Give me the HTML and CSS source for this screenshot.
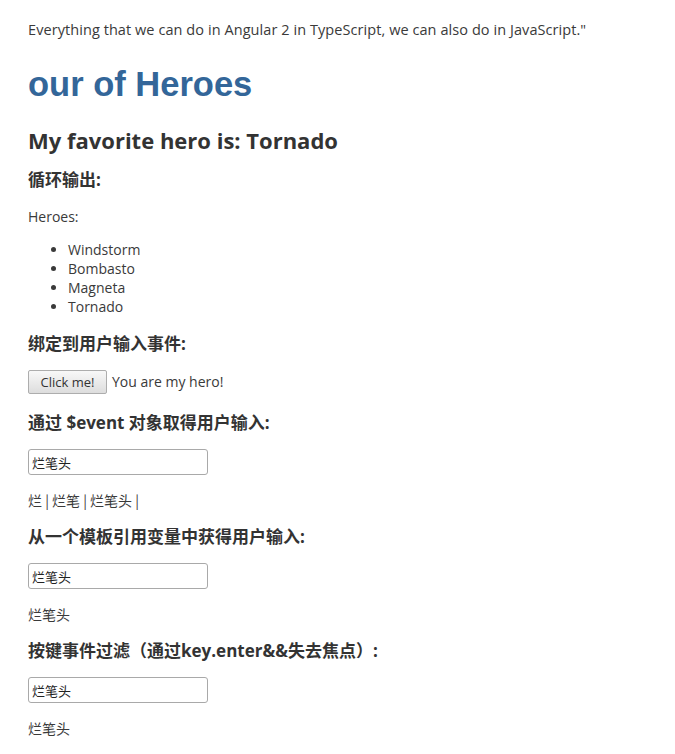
FILE: index.html
```html
<!DOCTYPE html>
<html lang="zh">
<head>
<meta charset="utf-8">
<title>Tour of Heroes</title>
<link rel="stylesheet" href="styles.css">
</head>
<body>
<p class="quote">Everything that we can do in Angular 2 in TypeScript, we can also do in JavaScript."</p>
<h1 class="title">our of Heroes</h1>
<h2 class="fav">My favorite hero is: Tornado</h2>

<h3 class="sec sec-first">循环输出:</h3>
<p class="line heroes-label">Heroes:</p>
<ul class="heroes">
  <li>Windstorm</li>
  <li>Bombasto</li>
  <li>Magneta</li>
  <li>Tornado</li>
</ul>

<h3 class="sec sec-a">绑定到用户输入事件:</h3>
<div class="btn-row">
  <button class="btn" type="button">Click me!</button>
  <span class="line">You are my hero!</span>
</div>

<h3 class="sec sec-b">通过 $event 对象取得用户输入:</h3>
<input class="field" type="text" value="烂笔头">
<p class="line out">烂 | 烂笔 | 烂笔头 |</p>

<h3 class="sec sec-c">从一个模板引用变量中获得用户输入:</h3>
<input class="field" type="text" value="烂笔头">
<p class="line out">烂笔头</p>

<h3 class="sec sec-c">按键事件过滤（通过key.enter&amp;&amp;失去焦点）:</h3>
<input class="field" type="text" value="烂笔头">
<p class="line out">烂笔头</p>
</body>
</html>
```

FILE: styles.css
```css
html, body {
  margin: 0;
  padding: 0;
  background: #fff;
}
body {
  padding: 0 28px;
  color: #333;
  font-family: "Open Sans", "Noto Sans CJK SC", sans-serif;
  font-size: 14px;
}
p, h1, h2, h3, ul {
  margin: 0;
}
.quote {
  margin-top: 20px;
  line-height: 20px;
  font-size: 14.5px;
  font-weight: 400;
  letter-spacing: 0.07px;
  color: #3a3a3a;
}
.title {
  margin-top: 25px;
  line-height: 38px;
  font-family: Arial, "Liberation Sans", sans-serif;
  font-size: 34.5px;
  font-weight: bold;
  color: #336699;
}
.fav {
  margin-top: 23px;
  line-height: 28px;
  font-family: "Open Sans", "Noto Sans CJK SC", sans-serif;
  font-size: 22px;
  font-weight: 700;
  color: #333;
}
.sec {
  line-height: 22px;
  font-family: "Open Sans", "Noto Sans CJK SC", sans-serif;
  font-size: 17px;
  font-weight: bold;
  color: #333;
}
.sec-first { margin-top: 15px; }
.sec-a { margin-top: 17px; }
.sec-b { margin-top: 18px; }
.sec-c { margin-top: 16px; }
.line {
  line-height: 20px;
  font-size: 14px;
  font-weight: 400;
  color: #3a3a3a;
}
.heroes-label { margin-top: 16px; }
.heroes {
  margin-top: 13px;
  padding-left: 40px;
  line-height: 19px;
  font-weight: 400;
  color: #3a3a3a;
}
.btn-row {
  margin-top: 15px;
  display: flex;
  align-items: center;
  gap: 5px;
  height: 24px;
}
.btn {
  box-sizing: border-box;
  width: 79px;
  height: 24px;
  margin: 0;
  padding: 0;
  border: 1px solid #adadad;
  border-radius: 2px;
  background: linear-gradient(#f8f8f8, #dddddd);
  font-family: "Open Sans", sans-serif;
  font-size: 13px;
  color: #333;
}
.field {
  display: block;
  box-sizing: border-box;
  margin: 15px 0 0 0;
  width: 180px;
  height: 26px;
  padding: 0 3px;
  border: 1px solid #a9a9a9;
  border-radius: 3px;
  font-family: "Noto Sans CJK SC", sans-serif;
  font-size: 13px;
  color: #222;
  background: #fff;
}
.out {
  margin-top: 15px;
  font-family: "Noto Sans CJK SC", sans-serif;
}
```
